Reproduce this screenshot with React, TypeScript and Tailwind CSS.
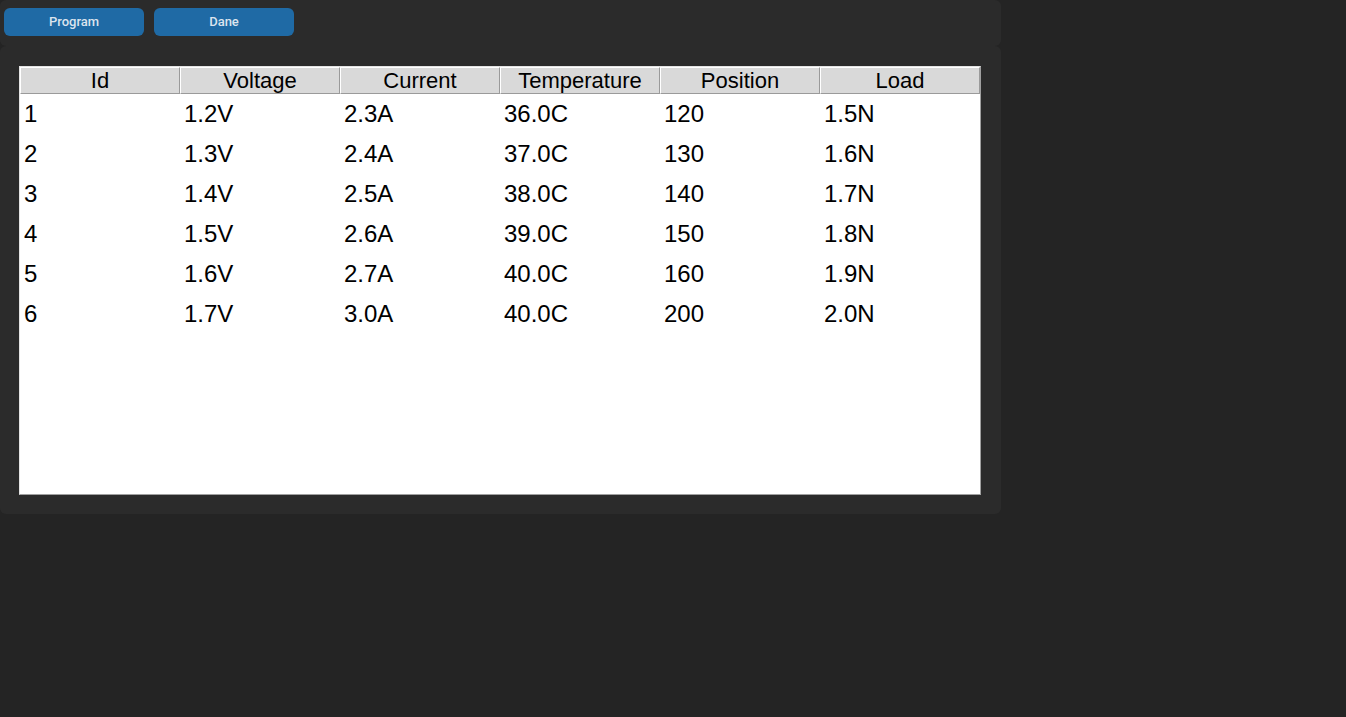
const COLUMNS = ["Id", "Voltage", "Current", "Temperature", "Position", "Load"];

const ROWS = [
  ["1", "1.2V", "2.3A", "36.0C", "120", "1.5N"],
  ["2", "1.3V", "2.4A", "37.0C", "130", "1.6N"],
  ["3", "1.4V", "2.5A", "38.0C", "140", "1.7N"],
  ["4", "1.5V", "2.6A", "39.0C", "150", "1.8N"],
  ["5", "1.6V", "2.7A", "40.0C", "160", "1.9N"],
  ["6", "1.7V", "3.0A", "40.0C", "200", "2.0N"],
];

function NavButton({ label }: { label: string }) {
  return (
    <button className="h-[28px] w-[140px] rounded-md bg-[#1f6aa5] text-[13px] font-medium text-[#dce4ee] font-['Roboto',sans-serif]">
      {label}
    </button>
  );
}

export default function App() {
  return (
    <div className="min-h-[717px] w-full bg-[#242424]">
      <div className="w-[1001px]">
        {/* top bar */}
        <div className="flex h-[46px] gap-[10px] rounded-md bg-[#2b2b2b] px-[4px] pt-[8px]">
          <NavButton label="Program" />
          <NavButton label="Dane" />
        </div>

        {/* table panel */}
        <div className="h-[468px] rounded-md bg-[#2b2b2b] pl-[19px] pt-[20px]">
          <div className="h-[429px] w-[962px] border border-t-[#e3e3e3] border-l-[#e3e3e3] border-b-[#a0a0a0] border-r-[#a0a0a0] bg-white font-['Liberation_Sans',Arial,sans-serif] text-black">
            <div className="flex">
              {COLUMNS.map((c) => (
                <div
                  key={c}
                  className="flex h-[27px] w-[160px] items-center justify-center border border-t-white border-l-white border-b-[#9a9a9a] border-r-[#9a9a9a] bg-[#d9d9d9] text-[22px] leading-none"
                >
                  {c}
                </div>
              ))}
            </div>
            {ROWS.map((row) => (
              <div key={row[0]} className="flex h-[40px] items-center">
                {row.map((cell, i) => (
                  <div key={i} className="w-[160px] pl-[4px] text-[24px] leading-none">
                    {cell}
                  </div>
                ))}
              </div>
            ))}
          </div>
        </div>
      </div>
    </div>
  );
}
